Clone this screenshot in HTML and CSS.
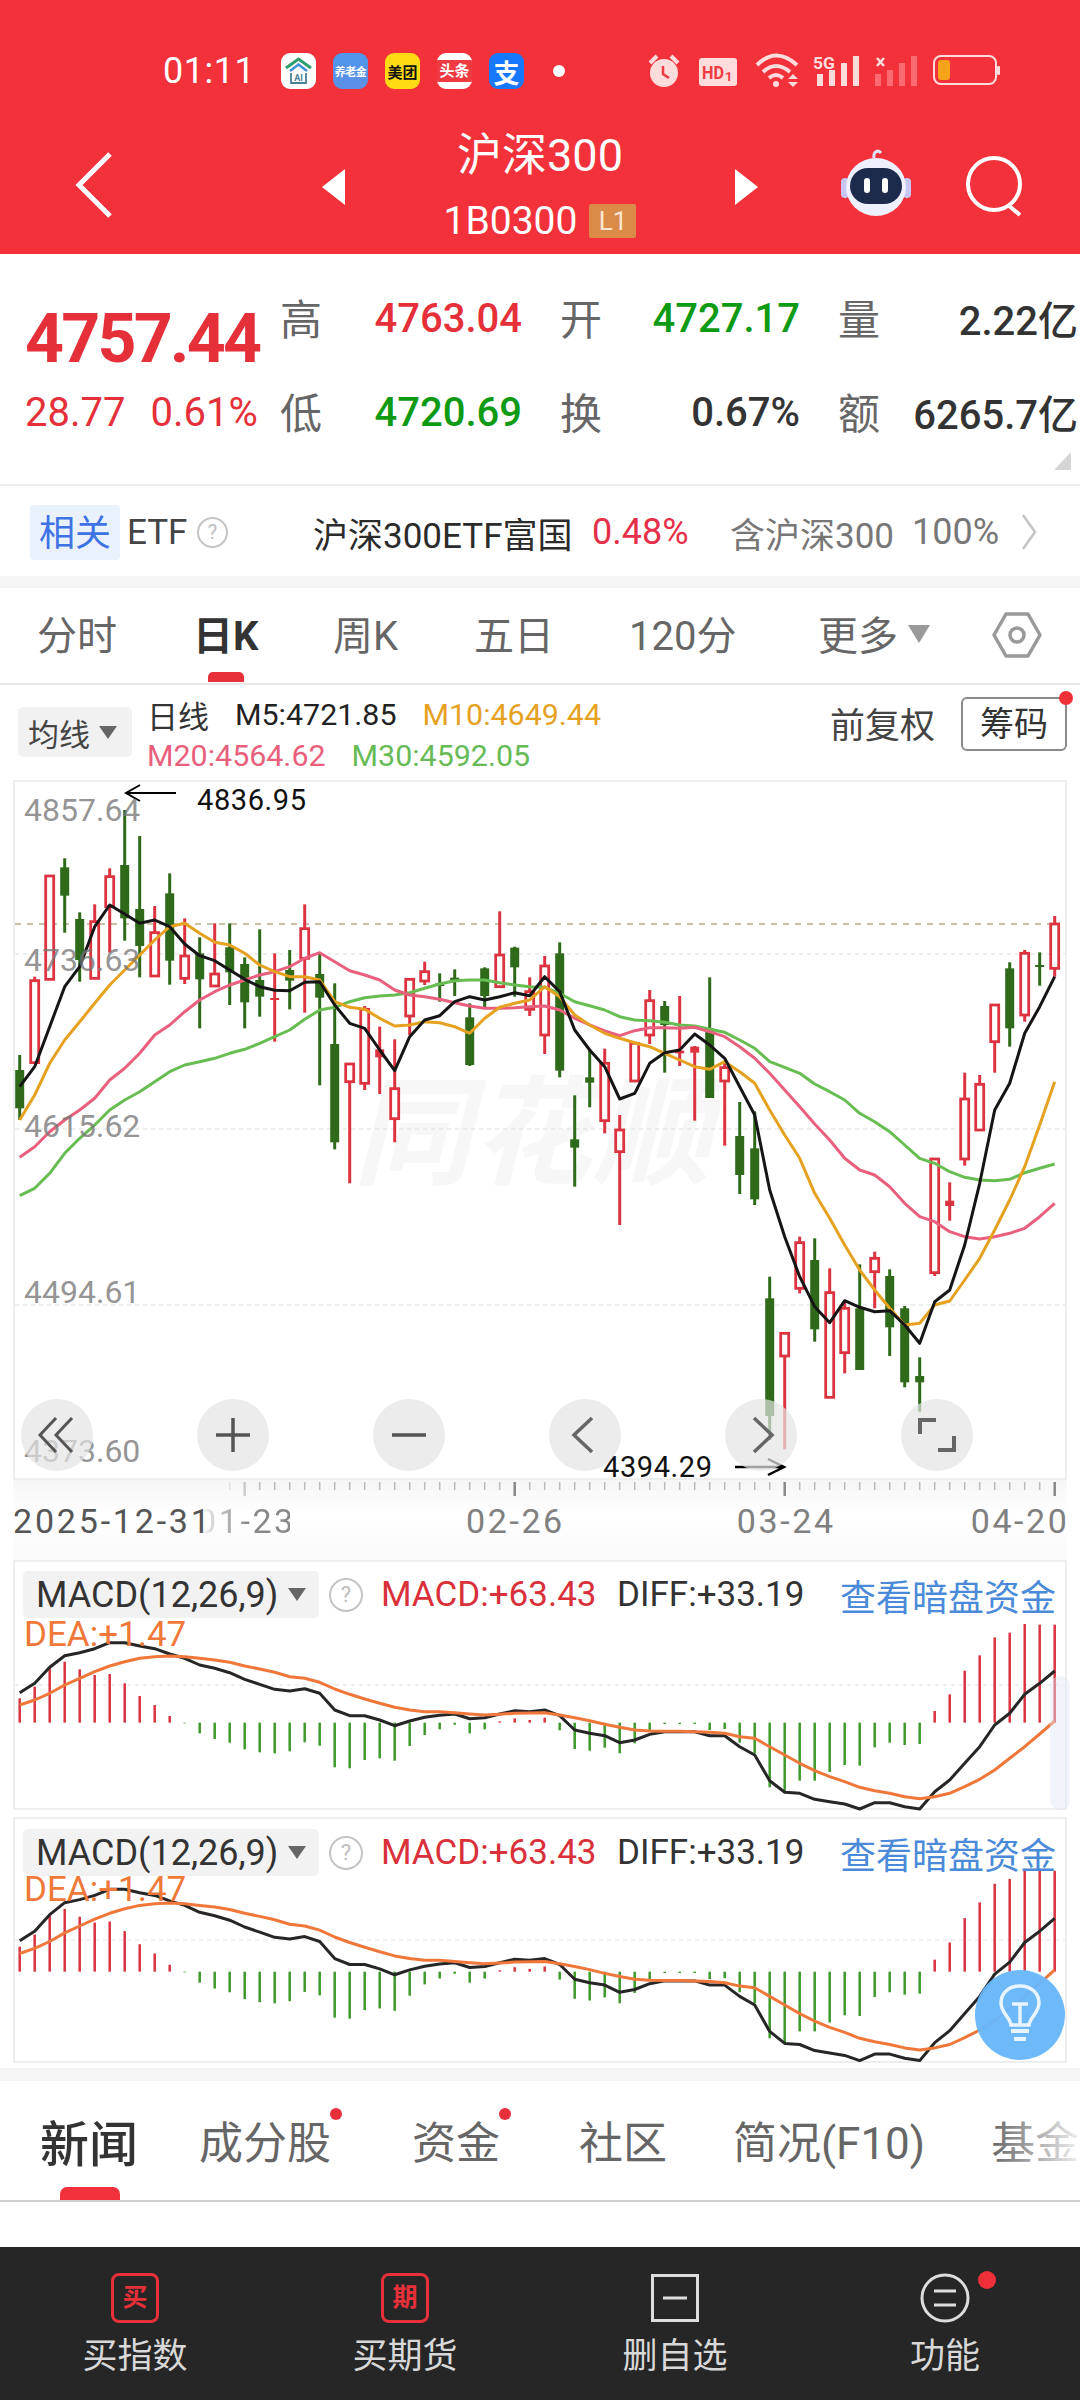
FILE: index.html
```html
<!DOCTYPE html>
<html lang="zh-CN">

<head>
    <meta charset="UTF-8">
    <meta name="viewport" content="width=device-width, initial-scale=1.0">
    <title>沪深300</title>
    <link rel="stylesheet" href="styles.css">
</head>

<body>
    <header class="header">
        <div class="status">
            <span class="time">01:11</span>
            <div class="app-icons">
                <span class="app app-ai">
                    <svg width="35" height="35" viewBox="0 0 35 35"><path d="M5 14 L17.500 5 L30 14" fill="none" stroke="#2f9e6e" stroke-width="3"/><path d="M9 17 L17.500 10.500 L26 17" fill="none" stroke="#3c8ed8" stroke-width="2.500"/><path d="M10 19 V29 H25 V19" fill="none" stroke="#4a7f9a" stroke-width="1.800"/><text x="17.500" y="27" font-size="9" font-weight="700" text-anchor="middle" fill="#4a7f9a" font-family="Roboto">AI</text></svg>
                </span>
                <span class="app app-blue">养老金</span>
                <span class="app app-meituan">美团</span>
                <span class="app app-toutiao"><span class="toutiao-band">头条</span></span>
                <span class="app app-alipay">支</span>
            </div>
            <span class="status-dot"></span>
            <svg class="status-icons" width="352" height="36" viewBox="648 53 352 36">
                <circle cx="664" cy="73" r="14" fill="#ffdcdc"/>
                <path d="M650 63 L657 56 M678 63 L671 56" stroke="#ffdcdc" stroke-width="4"/>
                <path d="M663 66 V74 L669 78" fill="none" stroke="#ef3a42" stroke-width="2.500"/>
                <rect x="699" y="58" width="38" height="28" rx="3" fill="#ffdcdc"/>
                <text x="702" y="79" font-size="19" font-weight="700" fill="#ef3a42" font-family="Roboto" textLength="22" lengthAdjust="spacingAndGlyphs">HD</text>
                <text x="725" y="81" font-size="13" font-weight="700" fill="#ef3a42" font-family="Roboto">1</text>
                <path d="M757 65 Q776 46 797 65 M763 72 Q776 60 790 72 M769 78 Q776 72 783 78" fill="none" stroke="#ffdcdc" stroke-width="4"/>
                <circle cx="776" cy="84" r="3" fill="#ffdcdc"/>
                <path d="M788 79 L793 74 L798 79 Z M788 82 L798 82 L793 87 Z" fill="#ffdcdc"/>
                <text x="813" y="69" font-size="17" font-weight="700" fill="#ffdcdc" font-family="Roboto" textLength="22" lengthAdjust="spacingAndGlyphs">5G</text>
                <path d="M817 74 h6 v12 h-6 Z M829 70 h6 v16 h-6 Z M841 63 h6 v23 h-6 Z M853 56 h6 v30 h-6 Z" fill="#ffdcdc"/>
                <path d="M877 58 L884 66 M884 58 L877 66" stroke="#ffdcdc" stroke-width="2.500"/>
                <path d="M875 74 h6 v12 h-6 Z M887 70 h6 v16 h-6 Z M899 63 h6 v23 h-6 Z M911 56 h6 v30 h-6 Z" fill="#ff9a9e" opacity="0.55"/>
                <rect x="934" y="56" width="62" height="28" rx="7" fill="none" stroke="#ffdcdc" stroke-width="2"/>
                <rect x="938" y="60" width="12" height="20" rx="3" fill="#f7a21b"/>
                <rect x="997" y="66" width="3" height="9" rx="1" fill="#ffdcdc"/>
            </svg>
        </div>
        <div class="nav">
            <svg class="nav-back" width="38" height="68" viewBox="0 0 38 68"><path d="M35 3 L4 34 L35 65" fill="none" stroke="#fff" stroke-width="5"/></svg>
            <span class="tri tri-left"></span>
            <div class="nav-title">
                <div class="title">沪深300</div>
                <div class="code"><span>1B0300</span><span class="level">L1</span></div>
            </div>
            <span class="tri tri-right"></span>
            <svg class="robot" width="72" height="68" viewBox="0 0 72 68">
                <path d="M34 10 C33 4 38 1 41 5" fill="none" stroke="#dfe2fb" stroke-width="3"/>
                <rect x="1" y="30" width="8" height="20" rx="4" fill="#c7c6f5"/>
                <rect x="63" y="30" width="8" height="20" rx="4" fill="#c7c6f5"/>
                <ellipse cx="36" cy="39" rx="30" ry="29" fill="#eef0fd"/>
                <rect x="10" y="20" width="52" height="36" rx="18" fill="#1d2a4c"/>
                <rect x="24" y="30" width="6" height="15" rx="3" fill="#fff"/>
                <rect x="42" y="30" width="6" height="15" rx="3" fill="#fff"/>
            </svg>
            <svg class="search" width="60" height="62" viewBox="0 0 60 62"><circle cx="29" cy="29" r="26" fill="none" stroke="#fff" stroke-width="4"/><path d="M43 50 L55 60" stroke="#fff" stroke-width="4"/></svg>
        </div>
    </header>

    <section class="quote">
        <div class="price">4757.44</div>
        <div class="label">高</div>
        <div class="value up">4763.04</div>
        <div class="label">开</div>
        <div class="value down">4727.17</div>
        <div class="label">量</div>
        <div class="value last">2.22亿</div>
        <div class="change"><span>28.77</span><span>0.61%</span></div>
        <div class="label">低</div>
        <div class="value down">4720.69</div>
        <div class="label">换</div>
        <div class="value">0.67%</div>
        <div class="label">额</div>
        <div class="value last">6265.7亿</div>
        <span class="corner"></span>
    </section>

    <section class="etf">
        <span class="etf-tag">相关</span>
        <span class="etf-name">ETF</span>
        <span class="help help-etf">?</span>
        <span class="etf-fund">沪深300ETF富国</span>
        <span class="etf-pct">0.48%</span>
        <span class="etf-hold">含沪深300</span>
        <span class="etf-share">100%</span>
        <svg class="etf-arrow" width="16" height="38" viewBox="0 0 16 38"><path d="M2 2 L14 19 L2 36" fill="none" stroke="#c4c4c4" stroke-width="2.500"/></svg>
    </section>

    <div class="band band-top"></div>

    <nav class="period-tabs">
        <span class="period period-time">分时</span>
        <span class="period period-day">日K<i class="period-line"></i></span>
        <span class="period period-week">周K</span>
        <span class="period period-five">五日</span>
        <span class="period period-120">120分</span>
        <span class="period period-more">更多</span>
        <span class="more-tri"></span>
        <svg class="hex" width="52" height="48" viewBox="0 0 52 48"><path d="M15 3 H37 L49 24 L37 45 H15 L3 24 Z" fill="none" stroke="#999" stroke-width="3.500" stroke-linejoin="round"/><circle cx="26" cy="24" r="7" fill="none" stroke="#999" stroke-width="3.500"/></svg>
    </nav>

    <section class="legend-row">
        <div class="ma-btn"><span>均线</span><i class="drop"></i></div>
        <div class="legend">
            <div class="legend-line"><span class="legend-name">日线</span><span class="c-m5">M5:4721.85</span><span class="c-m10">M10:4649.44</span></div>
            <div class="legend-line"><span class="c-m20">M20:4564.62</span><span class="c-m30">M30:4592.05</span></div>
        </div>
        <span class="fq">前复权</span>
        <span class="chip-btn">筹码<i class="chip-dot"></i></span>
    </section>

    <section class="chart">
        <div class="watermark">同花顺</div>
        <svg id="kline" class="chart-svg" width="1050" height="696" viewBox="15 782 1050 696"></svg>
        <span class="axis-label axis-1">4857.64</span>
        <span class="axis-label axis-2">4736.63</span>
        <span class="axis-label axis-3">4615.62</span>
        <span class="axis-label axis-4">4494.61</span>
        <span class="axis-label axis-5">4373.60</span>
        <span class="mark mark-high">4836.95</span>
        <span class="mark mark-low">4394.29</span>
        <div class="chart-btns">
            <span class="round-btn"><svg width="40" height="40" viewBox="0 0 40 40"><path d="M19 3 L3 20 L19 37 M35 3 L19 20 L35 37" fill="none" stroke="#555" stroke-width="3"/></svg></span>
            <span class="round-btn"><svg width="40" height="40" viewBox="0 0 40 40"><path d="M3 20 H37 M20 3 V37" fill="none" stroke="#555" stroke-width="3.500"/></svg></span>
            <span class="round-btn"><svg width="40" height="40" viewBox="0 0 40 40"><path d="M3 20 H37" fill="none" stroke="#555" stroke-width="3.500"/></svg></span>
            <span class="round-btn"><svg width="40" height="40" viewBox="0 0 40 40"><path d="M27 3 L9 20 L27 37" fill="none" stroke="#666" stroke-width="3.500"/></svg></span>
            <span class="round-btn"><svg width="40" height="40" viewBox="0 0 40 40"><path d="M13 3 L31 20 L13 37" fill="none" stroke="#666" stroke-width="3.500"/></svg></span>
            <span class="round-btn"><svg width="40" height="40" viewBox="0 0 40 40"><path d="M19 5 H3 V19 M21 35 H37 V21" fill="none" stroke="#666" stroke-width="4"/></svg></span>
        </div>
    </section>

    <section class="date-axis">
        <svg id="ticks" class="ticks" width="1054" height="18" viewBox="13 1480 1054 18"></svg>
        <div class="dates">
            <span class="date-first">2025-12-31</span>
            <span class="date-fade">01-23</span>
            <span class="date-b">02-26</span>
            <span class="date-c">03-24</span>
            <span class="date-d">04-20</span>
        </div>
    </section>

    <section class="macd macd-one">
        <svg id="macd1" class="macd-svg" width="1050" height="246" viewBox="15 1562 1050 246"></svg>
        <div class="macd-head">
            <div class="macd-btn"><span>MACD(12,26,9)</span><i class="drop"></i></div>
            <span class="help help-macd">?</span>
            <span class="macd-red">MACD:+63.43</span>
            <span class="macd-diff">DIFF:+33.19</span>
            <span class="macd-link">查看暗盘资金</span>
        </div>
        <div class="macd-dea">DEA:+1.47</div>
        <span class="scroll-handle"></span>
    </section>

    <section class="macd macd-two">
        <svg id="macd2" class="macd-svg" width="1050" height="242" viewBox="15 1819 1050 242"></svg>
        <div class="macd-head">
            <div class="macd-btn"><span>MACD(12,26,9)</span><i class="drop"></i></div>
            <span class="help help-macd">?</span>
            <span class="macd-red">MACD:+63.43</span>
            <span class="macd-diff">DIFF:+33.19</span>
            <span class="macd-link">查看暗盘资金</span>
        </div>
        <div class="macd-dea">DEA:+1.47</div>
        <span class="bulb">
            <svg width="44" height="62" viewBox="0 0 44 62"><path d="M13 41 C12 33 3 29 3 19 C3 9 11 2 22 2 C33 2 41 9 41 19 C41 29 32 33 31 41 Z" fill="none" stroke="#e8f4ff" stroke-width="3.500"/><path d="M14 20 H30 M22 20 V40" fill="none" stroke="#e8f4ff" stroke-width="3.500"/><path d="M13 47 H31 M16 55 H28" fill="none" stroke="#e8f4ff" stroke-width="4"/></svg>
        </span>
    </section>

    <div class="band band-bottom"></div>

    <nav class="news-tabs">
        <span class="news-tab news-active">新闻<i class="news-line"></i></span>
        <span class="news-tab">成分股<i class="news-dot"></i></span>
        <span class="news-tab">资金<i class="news-dot"></i></span>
        <span class="news-tab">社区</span>
        <span class="news-tab">简况(F10)</span>
        <span class="news-tab">基金</span>
        <span class="news-fade"></span>
    </nav>

    <div class="blank"></div>

    <footer class="toolbar">
        <div class="tool"><span class="tool-box">买</span><span class="tool-label">买指数</span></div>
        <div class="tool"><span class="tool-box">期</span><span class="tool-label">买期货</span></div>
        <div class="tool">
            <svg class="tool-icon" width="48" height="48" viewBox="0 0 48 48"><rect x="1.500" y="1.500" width="45" height="45" fill="none" stroke="#ddd" stroke-width="3"/><path d="M12 24 H36" stroke="#ddd" stroke-width="3"/></svg>
            <span class="tool-label">删自选</span>
        </div>
        <div class="tool tool-more">
            <svg class="tool-icon" width="50" height="50" viewBox="0 0 50 50"><circle cx="25" cy="25" r="23" fill="none" stroke="#ddd" stroke-width="3"/><path d="M14 18 H36 M14 32 H36" stroke="#ddd" stroke-width="3"/></svg>
            <i class="tool-dot"></i>
            <span class="tool-label">功能</span>
        </div>
    </footer>

    <script src="chart.js"></script>
</body>

</html>
```

FILE: styles.css
```css
* {
    box-sizing: border-box;
}

body {
    margin: 0;
    width: 1080px;
    height: 2400px;
    overflow: hidden;
    background-color: #fff;
    font-family: Roboto, "Noto Sans CJK SC", sans-serif;
    color: #333;
}

i {
    font-style: normal;
}

/* header */
.header {
    height: 254px;
    padding-top: 53px;
    background-color: #f2313a;
    color: #fff;
    overflow: hidden;
}

.status {
    display: flex;
    align-items: center;
    height: 36px;
    padding-left: 163px;
}

.time {
    width: 92px;
    font-size: 36px;
    letter-spacing: 0.5px;
}

.app-icons {
    display: flex;
    gap: 17px;
    margin-left: 26px;
}

.app {
    display: flex;
    align-items: center;
    justify-content: center;
    width: 35px;
    height: 36px;
    border-radius: 9px;
    font-weight: 700;
    overflow: hidden;
}

.app-ai {
    background-color: #fff;
}

.app-blue {
    background: linear-gradient(#4f97ec, #5d8fe6);
    font-size: 11px;
    letter-spacing: -0.5px;
    white-space: nowrap;
}

.app-meituan {
    background-color: #ffdb14;
    color: #111;
    font-size: 15px;
    white-space: nowrap;
}

.app-toutiao {
    background-color: #fff;
}

.toutiao-band {
    width: 100%;
    height: 22px;
    line-height: 22px;
    background-color: #ef3a42;
    color: #fff;
    font-size: 15px;
    text-align: center;
    white-space: nowrap;
}

.app-alipay {
    background-color: #1677ff;
    font-size: 26px;
}

.status-dot {
    width: 12px;
    height: 12px;
    margin-left: 29px;
    border-radius: 50%;
    background-color: #fff;
}

.status-icons {
    margin-left: 83px;
}

.nav {
    display: flex;
    align-items: center;
    height: 118px;
    margin-top: 39px;
    padding-left: 75px;
}

.nav-back {
    flex: none;
    margin-bottom: 4px;
}

.tri {
    flex: none;
    width: 0;
    height: 0;
    border-top: 18px solid transparent;
    border-bottom: 18px solid transparent;
}

.tri-left {
    margin-left: 209px;
    border-right: 23px solid #fff;
}

.tri-right {
    border-left: 23px solid #fff;
}

.nav-title {
    flex: none;
    width: 390px;
    text-align: center;
}

.title {
    height: 52px;
    line-height: 52px;
    font-size: 45px;
}

.code {
    display: flex;
    align-items: center;
    justify-content: center;
    gap: 12px;
    height: 46px;
    margin-top: 16px;
    font-size: 39px;
}

.level {
    width: 47px;
    height: 34px;
    line-height: 34px;
    border-radius: 2px;
    background-color: #dc8a48;
    font-size: 26px;
    color: #f9e6d2;
}

.robot {
    flex: none;
    margin-left: 82px;
    margin-bottom: 10px;
}

.search {
    flex: none;
    margin-left: 53px;
    margin-bottom: 2px;
}

/* quote block */
.quote {
    position: relative;
    display: grid;
    grid-template-columns: 255px 42px 238px 42px 236px 42px 198px;
    grid-auto-rows: 60px;
    row-gap: 34px;
    align-items: center;
    height: 232px;
    padding: 34px 0 0 25px;
    border-bottom: 2px solid #ececec;
}

.price {
    height: 60px;
    line-height: 60px;
    margin-top: 21px;
    margin-bottom: -21px;
    font-size: 68px;
    font-weight: 700;
    letter-spacing: -2.8px;
    color: #e5303a;
}

.change {
    display: flex;
    gap: 25px;
    font-size: 40px;
    color: #e5303a;
}

.label {
    margin-bottom: 4px;
    font-size: 42px;
    color: #666;
}

.value {
    padding-right: 38px;
    text-align: right;
    font-size: 40px;
    font-weight: 500;
    color: #333;
}

.value.last {
    padding-right: 0;
    white-space: nowrap;
}

.up {
    color: #e5303a;
}

.down {
    color: #0f9a14;
}

.corner {
    position: absolute;
    right: 9px;
    bottom: 14px;
    width: 0;
    height: 0;
    border-left: 17px solid transparent;
    border-bottom: 18px solid #d5d5d5;
}

/* related etf row */
.etf {
    display: flex;
    align-items: center;
    height: 90px;
    padding: 2px 0 0 30px;
    font-size: 35px;
    white-space: nowrap;
}

.etf-tag {
    width: 90px;
    height: 55px;
    line-height: 58px;
    border-radius: 4px;
    background-color: #e9f1fd;
    color: #3f72e4;
    font-size: 36px;
    text-align: center;
}

.etf-name {
    margin-left: 7px;
    width: 58px;
    color: #444;
}

.help {
    display: inline-block;
    flex: none;
    border: 2px solid #c4c4c4;
    border-radius: 50%;
    color: #bdbdbd;
    text-align: center;
}

.help-etf {
    width: 31px;
    height: 31px;
    line-height: 27px;
    margin-left: 12px;
    font-size: 20px;
}

.etf-fund {
    margin-left: 85px;
    width: 258px;
    color: #2b2b2b;
}

.etf-pct {
    margin-left: 21px;
    width: 100px;
    font-size: 36px;
    color: #e5304a;
}

.etf-hold {
    margin-left: 38px;
    width: 167px;
    color: #777;
}

.etf-share {
    margin-left: 15px;
    width: 90px;
    font-size: 36px;
    color: #777;
}

.etf-arrow {
    margin-left: 19px;
}

.band {
    background-color: #f5f5f5;
}

.band-top {
    height: 12px;
}

.band-bottom {
    height: 13px;
}

/* period tabs */
.period-tabs {
    display: flex;
    align-items: center;
    height: 97px;
    padding-bottom: 2px;
    border-bottom: 2px solid #e8e8e8;
    font-size: 40px;
    color: #666;
    white-space: nowrap;
}

.period {
    display: block;
    position: relative;
    height: 60px;
    line-height: 60px;
    margin-top: 4px;
}

.period-time {
    margin-left: 37px;
    width: 80px;
}

.period-day {
    margin-left: 76px;
    width: 66px;
    color: #333;
    font-weight: 700;
}

.period-line {
    position: absolute;
    left: 15px;
    top: 65px;
    width: 36px;
    height: 10px;
    border-radius: 5px 5px 0 0;
    background-color: #e8303a;
}

.period-week {
    margin-left: 74px;
    width: 70px;
}

.period-five {
    margin-left: 71px;
    width: 80px;
}

.period-120 {
    margin-left: 75px;
    width: 112px;
}

.period-more {
    margin-left: 77px;
    width: 80px;
}

.more-tri {
    margin-left: 10px;
    width: 0;
    height: 0;
    border-left: 11px solid transparent;
    border-right: 11px solid transparent;
    border-top: 18px solid #999;
    margin-bottom: 2px;
}

.hex {
    margin-left: 61px;
    margin-top: 1px;
}

/* moving average legend */
.legend-row {
    display: flex;
    height: 95px;
    white-space: nowrap;
}

.ma-btn {
    display: flex;
    align-items: center;
    width: 114px;
    height: 50px;
    margin: 22px 0 0 18px;
    padding-left: 10px;
    border-radius: 5px;
    background-color: #f1f1f1;
    font-size: 31px;
    color: #444;
}

.drop {
    width: 0;
    height: 0;
    margin-left: 9px;
    border-left: 9px solid transparent;
    border-right: 9px solid transparent;
    border-top: 13px solid #666;
}

.legend {
    margin-left: 15px;
    padding-top: 9px;
    width: 641px;
    font-size: 30.4px;
}

.legend-line {
    display: flex;
    align-items: center;
    gap: 26px;
    height: 41px;
}

.legend-name {
    font-size: 31px;
}

.c-m5 {
    color: #222;
}

.c-m10 {
    color: #e5a11f;
}

.c-m20 {
    color: #e8607c;
}

.c-m30 {
    color: #66bb55;
}

.fq {
    margin: 21px 0 0 42px;
    height: 42px;
    line-height: 42px;
    font-size: 35px;
    color: #444;
    width: 131px;
}

.chip-btn {
    position: relative;
    width: 106px;
    height: 54px;
    line-height: 50px;
    margin-top: 12px;
    border: 2px solid #8a8a8a;
    border-radius: 6px;
    font-size: 34px;
    color: #333;
    text-align: center;
}

.chip-dot {
    position: absolute;
    top: -8px;
    right: -8px;
    width: 14px;
    height: 14px;
    border-radius: 50%;
    background-color: #f03038;
}

/* kline chart */
.chart {
    position: relative;
    width: 1054px;
    height: 700px;
    margin-left: 13px;
    border: 2px solid #eeeeee;
}

.chart-svg {
    display: block;
    position: relative;
}

.watermark {
    position: absolute;
    left: 338px;
    top: 256px;
    font-size: 118px;
    font-style: italic;
    font-weight: 700;
    letter-spacing: 2px;
    color: #f7f7f7;
    white-space: nowrap;
}

.axis-label {
    position: absolute;
    left: 9px;
    font-size: 32px;
    line-height: 36px;
    color: rgba(120, 120, 120, 0.8);
}

.axis-1 {
    top: 10px;
}

.axis-2 {
    top: 160px;
}

.axis-3 {
    top: 326px;
}

.axis-4 {
    top: 492px;
}

.axis-5 {
    top: 651px;
}

.mark {
    position: absolute;
    font-size: 29px;
    line-height: 32px;
    letter-spacing: 0.6px;
    color: #111;
}

.mark-high {
    left: 182px;
    top: 2px;
}

.mark-low {
    left: 588px;
    top: 669px;
}

.chart-btns {
    position: absolute;
    left: 6px;
    bottom: 7px;
    display: flex;
    gap: 104px;
}

.round-btn {
    display: flex;
    align-items: center;
    justify-content: center;
    width: 72px;
    height: 72px;
    border-radius: 50%;
    background-color: rgba(228, 228, 228, 0.7);
}

/* date axis */
.date-axis {
    width: 1054px;
    height: 80px;
    margin-left: 13px;
    background: linear-gradient(#f6f6f6, #ffffff 45%, #f9f9f9);
}

.ticks {
    display: block;
}

.dates {
    display: flex;
    height: 44px;
    line-height: 44px;
    margin-top: 1px;
    font-size: 34px;
    letter-spacing: 2.6px;
    color: #808080;
    white-space: nowrap;
}

.date-first {
    width: 192px;
    letter-spacing: 2.8px;
    color: #555;
}

.date-fade {
    width: 93px;
    margin-left: -8px;
    background: linear-gradient(90deg, transparent 5%, #ccc 20%, #888 55%);
    -webkit-background-clip: text;
    background-clip: text;
    color: transparent;
}

.date-b {
    margin-left: 176px;
}

.date-c {
    margin-left: 172px;
}

.date-d {
    margin-left: 135px;
}

/* macd panels */
.macd {
    position: relative;
    width: 1054px;
    margin-left: 13px;
    border: 2px solid #eeeeee;
    white-space: nowrap;
}

.macd-one {
    height: 250px;
}

.macd-two {
    height: 246px;
    margin-top: 7px;
    margin-bottom: 5px;
}

.macd-svg {
    position: absolute;
    left: 0;
    top: 0;
    overflow: visible;
}

.macd-head {
    position: relative;
    display: flex;
    align-items: center;
    height: 47px;
    margin: 9px 0 0 8px;
    font-size: 35px;
}

.macd-two .macd-head {
    margin-top: 10px;
}

.macd-btn {
    display: flex;
    align-items: center;
    width: 296px;
    height: 47px;
    padding-left: 13px;
    border-radius: 5px;
    background-color: #f2f2f2;
    font-size: 36px;
    color: #333;
}

.macd-btn .drop {
    margin-left: 10px;
}

.help-macd {
    width: 34px;
    height: 34px;
    line-height: 30px;
    margin-left: 10px;
    font-size: 22px;
}

.macd-red {
    margin-left: 18px;
    width: 218px;
    color: #d9303a;
}

.macd-diff {
    margin-left: 18px;
    width: 185px;
    color: #333;
}

.macd-link {
    margin-left: 38px;
    font-size: 36px;
    color: #4a8ad8;
}

.macd-dea {
    position: relative;
    margin: -1px 0 0 9px;
    height: 36px;
    line-height: 36px;
    font-size: 35px;
    color: #f07838;
}

.macd-two .macd-dea {
    margin-top: -4px;
}

.scroll-handle {
    position: absolute;
    right: -5px;
    bottom: -2px;
    width: 20px;
    height: 134px;
    border-radius: 10px;
    background-color: rgba(225, 230, 245, 0.45);
}

.bulb {
    position: absolute;
    right: 0;
    top: 151px;
    display: flex;
    align-items: center;
    justify-content: center;
    width: 90px;
    height: 90px;
    border-radius: 50%;
    background-color: rgba(104, 182, 250, 0.96);
}

/* news tabs */
.news-tabs {
    position: relative;
    display: flex;
    align-items: center;
    height: 121px;
    padding: 0 0 1px 40px;
    border-bottom: 2px solid #cfcfcf;
    font-size: 44px;
    color: #666;
    white-space: nowrap;
    overflow: hidden;
}

.news-tab {
    position: relative;
    flex: none;
    margin-left: 66px;
}

.news-tab:nth-child(1) {
    margin-left: 0;
}

.news-tab:nth-child(2) {
    margin-left: 61px;
}

.news-tab:nth-child(3) {
    margin-left: 81px;
}

.news-tab:nth-child(4) {
    margin-left: 79px;
}

.news-active {
    font-size: 49px;
    font-weight: 500;
    color: #333;
}

.news-line {
    position: absolute;
    left: 20px;
    bottom: -24px;
    width: 60px;
    height: 13px;
    border-radius: 7px 7px 0 0;
    background-color: #f2313a;
}

.news-dot {
    position: absolute;
    right: -11px;
    top: 0;
    width: 12px;
    height: 12px;
    border-radius: 50%;
    background-color: #e8303a;
}

.news-fade {
    position: absolute;
    right: 0;
    top: 0;
    width: 90px;
    height: 119px;
    background: linear-gradient(90deg, rgba(255, 255, 255, 0), rgba(255, 255, 255, 0.9));
}

.blank {
    height: 45px;
}

/* bottom toolbar */
.toolbar {
    display: grid;
    grid-template-columns: repeat(4, 270px);
    height: 153px;
    background-color: #262626;
}

.tool {
    position: relative;
    display: flex;
    flex-direction: column;
    align-items: center;
    padding-top: 26px;
}

.tool-box {
    display: block;
    width: 48px;
    height: 50px;
    line-height: 43px;
    border: 3px solid #e8303a;
    border-radius: 8px;
    color: #e8303a;
    font-size: 25px;
    font-weight: 700;
    text-align: center;
}

.tool-icon {
    display: block;
    height: 50px;
}

.tool-label {
    height: 44px;
    line-height: 44px;
    margin-top: 12px;
    font-size: 35px;
    color: #d8d8d8;
}

.tool-dot {
    position: absolute;
    left: 168px;
    top: 24px;
    width: 18px;
    height: 18px;
    border-radius: 50%;
    background-color: #f03038;
}
```

FILE: chart.js
```js
// all numbers were read off the screenshot: y values are in 1/3 px from the top of their crop
var STEP = 15;
var X0 = 19.7;

function xAt(i) {
    return X0 + STEP * i;
}

// [red?, high, body top, body bottom, low]
var candles = [
    [0, 855, 900, 1015, 1050], [1, 620, 632, 878, 880], [1, 318, 318, 628, 630], [0, 265, 292, 377, 488],
    [0, 427, 447, 570, 635], [1, 403, 455, 625, 627], [1, 295, 320, 410, 548], [0, 120, 285, 445, 512],
    [0, 198, 417, 528, 622], [1, 408, 488, 618, 620], [0, 310, 370, 572, 644], [1, 445, 558, 625, 642],
    [0, 502, 550, 628, 775], [1, 460, 612, 648, 650], [0, 460, 532, 607, 705], [0, 562, 582, 697, 775],
    [0, 478, 630, 680, 740], [1, 550, 684, 690, 815], [0, 540, 600, 632, 718], [1, 403, 476, 565, 728],
    [0, 548, 612, 683, 946], [0, 640, 822, 1117, 1138], [1, 880, 882, 935, 1240], [1, 708, 718, 940, 960],
    [1, 770, 838, 862, 972], [1, 808, 956, 1046, 1117], [1, 628, 628, 738, 795], [1, 575, 605, 633, 645],
    [0, 610, 640, 648, 695], [0, 598, 623, 630, 678], [0, 700, 742, 885, 888], [0, 592, 595, 678, 712],
    [1, 424, 555, 650, 652], [0, 530, 533, 592, 680], [1, 622, 665, 718, 738], [1, 558, 588, 795, 852],
    [0, 517, 550, 902, 922], [0, 976, 1108, 1133, 1250], [0, 838, 922, 938, 1012], [1, 836, 880, 1052, 1090],
    [1, 1035, 1080, 1145, 1365], [1, 815, 820, 933, 935], [1, 660, 692, 795, 822], [0, 693, 708, 765, 908],
    [1, 678, 842, 850, 888], [1, 828, 830, 848, 1052], [0, 622, 775, 984, 984], [1, 880, 893, 933, 1127],
    [0, 996, 1098, 1215, 1272], [0, 1024, 1135, 1288, 1305], [0, 1520, 1585, 1938, 2010], [1, 1690, 1690, 1758, 2038],
    [1, 1400, 1418, 1555, 1570], [0, 1405, 1470, 1678, 1715], [1, 1495, 1568, 1882, 1882], [1, 1595, 1615, 1748, 1810],
    [0, 1483, 1615, 1800, 1800], [1, 1445, 1465, 1505, 1615], [0, 1498, 1518, 1672, 1758], [0, 1608, 1615, 1837, 1852],
    [0, 1762, 1818, 1837, 1925], [1, 1167, 1167, 1508, 1518], [1, 1237, 1292, 1308, 1352], [1, 908, 987, 1167, 1187],
    [1, 915, 943, 1080, 1080], [1, 705, 705, 815, 908], [0, 577, 595, 775, 830], [1, 540, 550, 735, 755],
    [0, 547, 585, 590, 647], [1, 438, 462, 595, 620]
];

var m5 = [950, 890, 770, 650, 590, 470, 405, 432, 460, 450, 470, 522, 557, 572, 600, 628, 650, 661, 662, 637, 635, 705, 760, 775, 840, 902, 800, 750, 737, 695, 680, 690, 680, 668, 677, 620, 665, 780, 840, 890, 987, 970, 880, 848, 840, 792, 825, 865, 950, 1035, 1260, 1400, 1520, 1610, 1658, 1592, 1612, 1625, 1622, 1665, 1720, 1595, 1560, 1425, 1240, 1020, 940, 790, 710, 620];
var m10 = [1050, 975, 880, 810, 755, 700, 645, 600, 555, 510, 470, 460, 490, 517, 525, 550, 585, 605, 620, 620, 630, 695, 712, 718, 745, 768, 765, 755, 758, 770, 790, 745, 712, 700, 690, 650, 680, 735, 765, 790, 805, 818, 830, 850, 870, 890, 898, 875, 905, 940, 1020, 1095, 1165, 1270, 1345, 1425, 1500, 1560, 1615, 1665, 1660, 1605, 1593, 1530, 1465, 1380, 1290, 1190, 1065, 935];
var m20 = [1162, 1130, 1085, 1050, 1020, 985, 930, 895, 850, 795, 765, 725, 690, 665, 645, 630, 615, 605, 590, 565, 548, 575, 602, 615, 630, 660, 675, 680, 688, 698, 708, 715, 715, 713, 710, 708, 720, 745, 765, 783, 797, 782, 773, 773, 775, 772, 785, 800, 830, 865, 910, 960, 1010, 1062, 1110, 1165, 1200, 1215, 1250, 1300, 1340, 1355, 1385, 1400, 1407, 1400, 1390, 1375, 1340, 1300];
var m30 = [1277, 1255, 1210, 1150, 1105, 1065, 1020, 990, 965, 935, 905, 885, 875, 865, 850, 838, 820, 800, 780, 748, 720, 712, 695, 683, 678, 675, 668, 655, 642, 632, 630, 630, 638, 645, 650, 652, 670, 695, 707, 720, 740, 750, 752, 757, 765, 768, 778, 787, 810, 835, 875, 892, 910, 942, 965, 990, 1030, 1055, 1085, 1125, 1165, 1180, 1205, 1222, 1230, 1232, 1228, 1208, 1195, 1182];

// macd bars: the end of each bar away from the zero line, above 518 is red
var bars = [445, 410, 355, 335, 358, 375, 372, 400, 438, 465, 498, 520, 550, 567, 578, 598, 607, 610, 604, 577, 587, 652, 655, 630, 625, 632, 588, 555, 538, 524, 550, 538, 514, 505, 510, 503, 541, 597, 602, 593, 610, 580, 545, 522, 522, 522, 540, 537, 578, 610, 712, 725, 692, 692, 666, 645, 647, 592, 578, 585, 582, 483, 433, 362, 316, 262, 248, 222, 224, 224];
var diff = [428, 400, 352, 317, 308, 296, 278, 278, 288, 296, 312, 325, 345, 355, 368, 388, 403, 418, 423, 416, 430, 480, 497, 497, 510, 527, 513, 502, 496, 492, 506, 503, 492, 482, 485, 480, 497, 540, 550, 557, 578, 570, 553, 545, 545, 545, 557, 557, 590, 615, 692, 727, 730, 748, 755, 762, 777, 758, 758, 770, 777, 725, 690, 640, 590, 525, 490, 433, 400, 363];
var dea = [465, 450, 430, 405, 385, 365, 348, 335, 325, 320, 318, 320, 325, 330, 337, 348, 357, 367, 380, 385, 397, 417, 433, 447, 460, 472, 480, 485, 485, 488, 492, 495, 493, 490, 489, 488, 495, 503, 512, 523, 532, 540, 543, 544, 544, 545, 547, 550, 560, 565, 590, 615, 640, 662, 680, 695, 712, 722, 730, 740, 746, 740, 730, 710, 688, 660, 625, 590, 552, 513];

function line(values, color, width, toY) {
    var pts = values.map(function (v, i) {
        return xAt(i).toFixed(1) + ',' + toY(v).toFixed(1);
    });
    return '<polyline points="' + pts.join(' ') + '" fill="none" stroke="' + color + '" stroke-width="' + width + '" stroke-linejoin="round"/>';
}

function dashed(y, color, width, dash) {
    return '<line x1="15" x2="1065" y1="' + y + '" y2="' + y + '" stroke="' + color + '" stroke-width="' + width + '" stroke-dasharray="' + dash + '"/>';
}

function drawKline() {
    var toY = function (v) { return 770 + v / 3; };
    var RED = '#dc3340';
    var GREEN = '#2f6a1a';
    var html = dashed(954, '#dddddd', 1, '4 4') + dashed(1129, '#dddddd', 1, '4 4') + dashed(1305, '#dddddd', 1, '4 4');
    html += '<line x1="15" x2="1060" y1="924" y2="924" stroke="#b9ad90" stroke-width="1.500" stroke-dasharray="6 6"/>';

    candles.forEach(function (c, i) {
        var x = xAt(i);
        var color = c[0] ? RED : GREEN;
        var top = toY(c[2]);
        var h = toY(c[3]) - top;
        html += '<line x1="' + x + '" x2="' + x + '" y1="' + toY(c[1]) + '" y2="' + toY(c[4]) + '" stroke="' + color + '" stroke-width="3"/>';
        if (c[0] && h > 8) {
            html += '<rect x="' + (x - 4) + '" y="' + top + '" width="8" height="' + h + '" fill="#fff" stroke="' + color + '" stroke-width="2.800"/>';
        } else {
            html += '<rect x="' + (x - 4.5) + '" y="' + top + '" width="9" height="' + Math.max(h, 2) + '" fill="' + color + '"/>';
        }
    });

    html += line(m30, '#68bd52', 3, toY);
    html += line(m20, '#e9607e', 3, toY);
    html += line(m10, '#e5a11f', 3, toY);
    html += line(m5, '#151515', 3, toY);

    // high and low markers
    html += '<path d="M176 793 H126 M140 785 L126 793 L140 801" fill="none" stroke="#000" stroke-width="2"/>';
    html += '<path d="M735 1467 H784 M768 1459 L784 1467 L768 1475" fill="none" stroke="#000" stroke-width="2.500"/>';
    document.getElementById('kline').innerHTML = html;
}

function drawMacd(id, toY, midY) {
    var ZERO = 518;
    var html = dashed(midY, '#e2e2e2', 1, '4 4');
    bars.forEach(function (b, i) {
        var x = xAt(i);
        var color = b < ZERO ? '#d93340' : '#3d9a2a';
        html += '<line x1="' + x + '" x2="' + x + '" y1="' + toY(ZERO) + '" y2="' + toY(b) + '" stroke="' + color + '" stroke-width="2.500"/>';
    });
    html += line(diff, '#262626', 3, toY);
    html += line(dea, '#f0773a', 3, toY);
    document.getElementById(id).innerHTML = html;
}

function drawTicks() {
    var html = '';
    for (var i = 14; i < 70; i++) {
        var x = xAt(i);
        var big = (i - 15) % 18 === 0;
        var opacity = i < 16 ? 0.4 : 1;
        html += '<line x1="' + x + '" x2="' + x + '" y1="1482" y2="' + (big ? 1496 : 1490) + '" stroke="' + (big ? '#888' : '#bbb') + '" stroke-width="' + (big ? 2.5 : 1.5) + '" opacity="' + opacity + '"/>';
    }
    document.getElementById('ticks').innerHTML = html;
}

drawKline();
drawMacd('macd1', function (v) { return 1550 + v / 3; }, 1685);
drawMacd('macd2', function (v) { return 1971.7 + (1550 + v / 3 - 1722.7) * 1.03; }, 1940);
drawTicks();
```
